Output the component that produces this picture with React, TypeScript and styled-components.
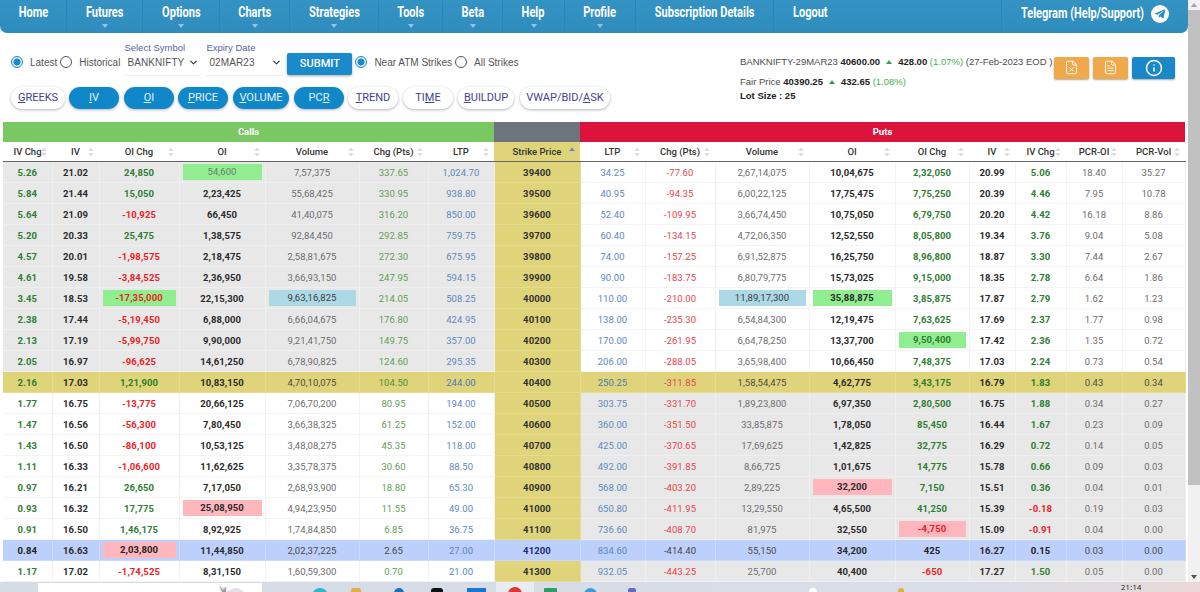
import React from "react";
import styled, { createGlobalStyle } from "styled-components";
import { ChevronDown, FileX, FileText, Info } from "lucide-react";
import { FaTelegramPlane } from "react-icons/fa";

const Global = createGlobalStyle`
  html, body { margin: 0; padding: 0; background: #fff; overflow: hidden; }
  * { box-sizing: border-box; }
`;

const Screen = styled.div`
  width: 1200px;
  height: 592px;
  display: flex;
  flex-direction: column;
  overflow: hidden;
`;
const Viewport = styled.div`
  height: 582px;
  display: flex;
`;
const Main = styled.main`
  width: 1188px;
  flex: none;
  display: flex;
  flex-direction: column;
`;

/* ---------- navigation ---------- */
const Nav = styled.nav`
  height: 33px;
  display: flex;
  background: linear-gradient(#3593c3, #2f8dbe);
  border-radius: 0 0 7px 7px;
  font-family: "Roboto", sans-serif;
  font-weight: 700;
  color: #fff;
`;
const NavItem = styled.div<{ $w: number; $start?: boolean }>`
  width: ${(p) => p.$w}px;
  flex: none;
  display: flex;
  flex-direction: column;
  align-items: ${(p) => (p.$start ? "flex-start" : "center")};
  padding: 5px 0 0 ${(p) => (p.$start ? 19 : 0)}px;
  border-right: 1px solid #2b86b5;
`;
const NavLabel = styled.span<{ $start?: boolean }>`
  display: block;
  font-size: 14.5px;
  line-height: 16px;
  white-space: nowrap;
  transform: scaleX(0.76);
  transform-origin: ${(p) => (p.$start ? "left center" : "center")};
`;
const Caret = styled.span`
  margin-top: 3px;
  width: 0;
  height: 0;
  border-left: 3.5px solid transparent;
  border-right: 3.5px solid transparent;
  border-top: 4px solid #8fc6e2;
`;
const NavRight = styled.div`
  flex: 1;
  display: flex;
  align-items: center;
  padding: 0 0 5px 19px;
`;
const TelegramLabel = styled.span`
  width: 130px;
  display: block;
  font-size: 15px;
  line-height: 17px;
  white-space: nowrap;
  transform: scaleX(0.73);
  transform-origin: left center;
`;
const PlaneDisc = styled.span`
  width: 18px;
  height: 18px;
  border-radius: 50%;
  background: #fff;
  color: #2f8dbe;
  display: flex;
  align-items: center;
  justify-content: center;
  flex: none;
`;

/* ---------- toolbar ---------- */
const Toolbar = styled.section`
  height: 89px;
  display: flex;
  justify-content: space-between;
  padding: 9px 13px 0 11px;
  font-family: "Liberation Sans", Arial, sans-serif;
`;
const LeftColumn = styled.div`
  display: flex;
  flex-direction: column;
  gap: 11px;
`;
const Controls = styled.div`
  height: 34px;
  display: flex;
  align-items: flex-end;
  font-size: 10px;
  color: #555;
`;
const RadioLabel = styled.label<{ $ml?: number }>`
  display: flex;
  align-items: center;
  height: 24px;
  margin-left: ${(p) => p.$ml ?? 0}px;
  padding-bottom: 3px;
`;
const RadioDot = styled.span<{ $on?: boolean }>`
  width: 12px;
  height: 12px;
  border-radius: 50%;
  border: 1px solid ${(p) => (p.$on ? "#1a8acb" : "#555")};
  background: ${(p) => (p.$on ? "radial-gradient(circle, #1a8acb 0 3.2px, #d5ecf8 3.8px)" : "#fff")};
  margin-right: 7px;
`;
const Field = styled.div<{ $w: number; $ml: number }>`
  width: ${(p) => p.$w}px;
  margin-left: ${(p) => p.$ml}px;
  display: flex;
  flex-direction: column;
`;
const FieldLabel = styled.span`
  color: #5b5fa8;
  font-size: 9.5px;
  line-height: 12px;
`;
const SelectBox = styled.div`
  height: 22px;
  display: flex;
  align-items: center;
  justify-content: space-between;
  padding: 0 1px 3px 3px;
  border-bottom: 1px solid #eee;
  color: #555;
  font-size: 10px;
  letter-spacing: 0.1px;
`;
const Submit = styled.button`
  width: 65px;
  height: 22px;
  margin: 0 3px 1px 4px;
  border: 0;
  border-radius: 2px;
  background: #1a8acb;
  color: #fff;
  font: 500 11px "Roboto", sans-serif;
  box-shadow: 0 1px 3px rgba(0, 0, 0, 0.35);
  align-self: flex-end;
`;
const Pills = styled.div`
  display: flex;
`;
const Pill = styled.button<{ $w: number; $ml: number; $on?: boolean }>`
  width: ${(p) => p.$w}px;
  margin-left: ${(p) => p.$ml}px;
  height: 22px;
  padding: 0;
  border: 0;
  border-radius: 11px;
  background: ${(p) => (p.$on ? "#0f87c9" : "#fff")};
  color: ${(p) => (p.$on ? "#e8f2fa" : "#3f4296")};
  font: 400 11px "Roboto", sans-serif;
  box-shadow: 0 1px 3px rgba(0, 0, 0, 0.3);
`;
const RightGroup = styled.div`
  display: flex;
  align-items: flex-start;
  gap: 4px;
`;
const InfoText = styled.div`
  width: 310px;
  padding-top: 13px;
  font-size: 9.5px;
  color: #4c4c4c;
  line-height: 14px;
  white-space: nowrap;
`;
const InfoLine = styled.div<{ $mb: number }>`
  margin-bottom: ${(p) => p.$mb}px;
  display: flex;
  align-items: center;
  white-space: pre;
`;
const Strong = styled.b`
  color: #222;
`;
const Up = styled.span`
  margin: 0 6px;
  width: 0;
  height: 0;
  border-left: 3.5px solid transparent;
  border-right: 3.5px solid transparent;
  border-bottom: 4px solid #3d9a5c;
`;
const Pct = styled.span`
  color: #4caf50;
`;
const Actions = styled.div`
  display: flex;
  gap: 4px;
  padding-top: 15px;
`;
const ActionBtn = styled.button<{ $w: number; $bg: string }>`
  width: ${(p) => p.$w}px;
  height: 22px;
  padding: 0;
  border: 0;
  border-radius: 2px;
  background: ${(p) => p.$bg};
  color: #fff;
  display: flex;
  align-items: center;
  justify-content: center;
  box-shadow: 0 1px 2px rgba(0, 0, 0, 0.35);
`;

/* ---------- table ---------- */
const TableWrap = styled.div`
  padding: 0 3px;
`;
const Table = styled.table`
  width: 1182px;
  table-layout: fixed;
  border-collapse: collapse;
  font-family: "Roboto", sans-serif;
  font-size: 9.5px;
`;
const BandCell = styled.th<{ $bg: string }>`
  height: 20px;
  padding: 0;
  background: ${(p) => p.$bg};
  color: #fff;
  font-size: 9.5px;
  font-weight: 700;
`;
const HeadCell = styled.th<{ $strike?: boolean }>`
  position: relative;
  height: 20px;
  padding: 0;
  font-weight: 500;
  font-size: 9.5px;
  color: #333;
  text-align: center;
  border-bottom: 1px solid #666;
  background: ${(p) => (p.$strike ? "#dfd479" : "#fff")};
`;
const SortMark = styled.svg`
  position: absolute;
  right: 5px;
  top: 5px;
`;
type Tone = "plain" | "itm" | "atm" | "low";
const toneBg: Record<Tone, string> = { plain: "#fff", itm: "#e8e8e8", atm: "#dfd479", low: "#bdcffb" };
const toneLine: Record<Tone, string> = { plain: "#f3f3f3", itm: "#efefef", atm: "#e6dc90", low: "#cddafc" };
const Cell = styled.td<{ $tone: Tone; $color: string; $bold?: boolean }>`
  height: 21px;
  padding: 0;
  text-align: center;
  background: ${(p) => toneBg[p.$tone]};
  color: ${(p) => p.$color};
  font-weight: ${(p) => (p.$bold ? 700 : 400)};
  letter-spacing: ${(p) => (p.$bold ? 0.1 : 0.05)}px;
  border-right: 1px solid ${(p) => toneLine[p.$tone]};
  border-bottom: 1px solid ${(p) => toneLine[p.$tone]};
`;
const Marked = styled.span<{ $bg: string }>`
  display: block;
  height: 16px;
  line-height: 16px;
  margin: 0 3px;
  background: ${(p) => p.$bg};
`;

/* ---------- scrollbar + taskbar ---------- */
const ScrollTrack = styled.div`
  width: 12px;
  flex: none;
  background: #f1f1f1;
  display: flex;
  flex-direction: column;
  align-items: center;
`;
const ArrowCell = styled.div`
  width: 12px;
  height: 10px;
  display: flex;
  align-items: center;
  justify-content: center;
`;
const Thumb = styled.div`
  width: 12px;
  height: 475px;
  background: #c1c1c1;
`;
const TrackGap = styled.div`
  flex: 1;
`;
const Arrow = styled.span<{ $up?: boolean; $c: string }>`
  width: 0;
  height: 0;
  border-left: 3px solid transparent;
  border-right: 3px solid transparent;
  ${(p) => (p.$up ? `border-bottom: 4px solid ${p.$c};` : `border-top: 4px solid ${p.$c};`)}
`;
const Taskbar = styled.footer`
  height: 10px;
  display: flex;
  overflow: hidden;
  background: linear-gradient(90deg, #d6dce6 0%, #d8dde8 80%, #e2dadd 94%, #ecd8d6 100%);
  font-family: "Noto Sans", sans-serif;
`;
const SearchBox = styled.div`
  width: 224px;
  margin: 1px 0 0 38px;
  background: #fff;
  display: flex;
  justify-content: flex-end;
  padding: 2px 17px 0 0;
`;
const Tile = styled.div<{ $active?: boolean; $ml: number; $w: number }>`
  width: ${(p) => p.$w}px;
  margin-left: ${(p) => p.$ml}px;
  flex: none;
  display: flex;
  justify-content: center;
  padding-top: ${(p) => (p.$active ? 5 : 6)}px;
  background: ${(p) => (p.$active ? "#e9ecf2" : "transparent")};
`;
const Blob = styled.span<{ $c: string; $r: number; $s: number }>`
  width: ${(p) => p.$s}px;
  height: ${(p) => p.$s}px;
  border-radius: ${(p) => p.$r}px;
  background: ${(p) => p.$c};
  flex: none;
`;
const Clock = styled.span<{ $ml: number }>`
  margin-left: ${(p) => p.$ml}px;
  padding-top: 1px;
  font-size: 7.5px;
  line-height: 9px;
  letter-spacing: 0.3px;
  color: #222;
`;

/* ---------- data ---------- */
const widths = [49, 47, 80, 86, 94, 69, 66, 86, 65, 70, 94, 86, 74, 46, 51, 56, 63];
const navItems: [string, number, boolean][] = [
  ["Home", 67, false], ["Futures", 76, true], ["Options", 77, true], ["Charts", 70, true],
  ["Strategies", 89, true], ["Tools", 64, true], ["Beta", 60, true], ["Help", 62, true],
  ["Profile", 71, true], ["Subscription Details", 138, false],
];
const pills: [string, string, string, number, number, boolean][] = [
  ["", "G", "REEKS", 54, 0, false], ["", "I", "V", 50, 4, true], ["", "O", "I", 50, 5, true],
  ["", "P", "RICE", 50, 4, true], ["", "V", "OLUME", 56, 5, true], ["PC", "R", "", 50, 5, true],
  ["", "T", "REND", 50, 4, false], ["TI", "M", "E", 50, 5, false], ["", "B", "UILDUP", 56, 5, false],
  ["VWAP/BID/", "A", "SK", 90, 6, false],
];
const heads = ["IV Chg", "IV", "OI Chg", "OI", "Volume", "Chg (Pts)", "LTP", "Strike Price", "LTP", "Chg (Pts)", "Volume", "OI", "OI Chg", "IV", "IV Chg", "PCR-OI", "PCR-Vol"];
const raw = `5.26 21.02 24,850 54,600 7,57,375 337.65 1,024.70 39400 34.25 -77.60 2,67,14,075 10,04,675 2,32,050 20.99 5.06 18.40 35.27
5.84 21.44 15,050 2,23,425 55,68,425 330.95 938.80 39500 40.95 -94.35 6,00,22,125 17,75,475 7,75,250 20.39 4.46 7.95 10.78
5.64 21.09 -10,925 66,450 41,40,075 316.20 850.00 39600 52.40 -109.95 3,66,74,450 10,75,050 6,79,750 20.20 4.42 16.18 8.86
5.20 20.33 25,475 1,38,575 92,84,450 292.85 759.75 39700 60.40 -134.15 4,72,06,350 12,52,550 8,05,800 19.34 3.76 9.04 5.08
4.57 20.01 -1,98,575 2,18,475 2,58,81,675 272.30 675.95 39800 74.00 -157.25 6,91,52,875 16,25,750 8,96,800 18.87 3.30 7.44 2.67
4.61 19.58 -3,84,525 2,36,950 3,66,93,150 247.95 594.15 39900 90.00 -183.75 6,80,79,775 15,73,025 9,15,000 18.35 2.78 6.64 1.86
3.45 18.53 -17,35,000 22,15,300 9,63,16,825 214.05 508.25 40000 110.00 -210.00 11,89,17,300 35,88,875 3,85,875 17.87 2.79 1.62 1.23
2.38 17.44 -5,19,450 6,88,000 6,66,04,675 176.80 424.95 40100 138.00 -235.30 6,54,84,300 12,19,475 7,63,625 17.69 2.37 1.77 0.98
2.13 17.19 -5,99,750 9,90,000 9,21,41,750 149.75 357.00 40200 170.00 -261.95 6,64,78,250 13,37,700 9,50,400 17.42 2.36 1.35 0.72
2.05 16.97 -96,625 14,61,250 6,78,90,825 124.60 295.35 40300 206.00 -288.05 3,65,98,400 10,66,450 7,48,375 17.03 2.24 0.73 0.54
2.16 17.03 1,21,900 10,83,150 4,70,10,075 104.50 244.00 40400 250.25 -311.85 1,58,54,475 4,62,775 3,43,175 16.79 1.83 0.43 0.34
1.77 16.75 -13,775 20,66,125 7,06,70,200 80.95 194.00 40500 303.75 -331.70 1,89,23,800 6,97,350 2,80,500 16.75 1.88 0.34 0.27
1.47 16.56 -56,300 7,80,450 3,66,38,325 61.25 152.00 40600 360.00 -351.50 33,85,875 1,78,050 85,450 16.44 1.67 0.23 0.09
1.43 16.50 -86,100 10,53,125 3,48,08,275 45.35 118.00 40700 425.00 -370.65 17,69,625 1,42,825 32,775 16.29 0.72 0.14 0.05
1.11 16.33 -1,06,600 11,62,625 3,35,78,375 30.60 88.50 40800 492.00 -391.85 8,66,725 1,01,675 14,775 15.78 0.66 0.09 0.03
0.97 16.21 26,650 7,17,050 2,68,93,900 18.80 65.30 40900 568.00 -403.20 2,89,225 32,200 7,150 15.51 0.36 0.04 0.01
0.93 16.32 17,775 25,08,950 4,94,23,950 11.55 49.00 41000 650.80 -411.95 13,29,550 4,65,500 41,250 15.39 -0.18 0.19 0.03
0.91 16.50 1,46,175 8,92,925 1,74,84,850 6.85 36.75 41100 736.60 -408.70 81,975 32,550 -4,750 15.09 -0.91 0.04 0.00
0.84 16.63 2,03,800 11,44,850 2,02,37,225 2.65 27.00 41200 834.60 -414.40 55,150 34,200 425 16.27 0.15 0.03 0.00
1.17 17.02 -1,74,525 8,31,150 1,60,59,300 0.70 21.00 41300 932.05 -443.25 25,700 40,400 -650 17.27 1.50 0.05 0.00`;
const rows = raw.split("\n").map((l) => l.split(" "));

const GREEN = "#90ee90", BLUE = "#add8e6", PINK = "#ffb6bd";
const marks: Record<string, string> = {
  "39400-3": GREEN, "40000-2": GREEN, "40000-4": BLUE, "40000-10": BLUE, "40000-11": GREEN,
  "40200-12": GREEN, "41000-3": PINK, "40900-11": PINK, "41200-2": PINK, "41100-12": PINK,
};

const boldCols = new Set([0, 1, 2, 3, 7, 11, 12, 13, 14]);
const signedBold = new Set([0, 2, 12, 14]);
const signedThin = new Set([5, 9]);

function colorOf(col: number, v: string, strike: number, marked: boolean) {
  const low = strike === 41200;
  const atm = strike === 40400;
  if (col === 7) return low ? "#1d2a7a" : "#333";
  if (col === 6 || col === 8) return atm ? "#4a78b8" : "#5c88c0";
  if (signedBold.has(col)) {
    if (low) return "#222";
    return v.startsWith("-") ? "#ee1c25" : "#2e7d32";
  }
  if (signedThin.has(col)) {
    if (low) return "#444";
    if (v.startsWith("-")) return "#e8434f";
    return atm ? "#4f8f45" : "#5f9e55";
  }
  if (col === 1 || col === 3 || col === 11 || col === 13) return "#2b2b2b";
  if (marked) return "#3c3c3c";
  return low || atm ? "#4c4c4c" : "#6d6d6d";
}

function toneOf(col: number, strike: number): Tone {
  if (strike === 40400) return "atm";
  if (strike === 41200) return "low";
  if (col === 7) return "atm";
  const isCall = col < 7;
  if (strike < 40400) return isCall ? "itm" : "plain";
  return isCall ? "plain" : "itm";
}

const Sort = ({ active }: { active?: boolean }) => (
  <SortMark width="6" height="10" viewBox="0 0 6 10">
    <path d="M3 0.5 L5.8 4 H0.2 Z" fill={active ? "#6f7fc0" : "#dcdcdc"} />
    {!active && <path d="M3 9.5 L5.8 6 H0.2 Z" fill="#dcdcdc" />}
  </SortMark>
);

const Cat = () => (
  <svg width="28" height="10" viewBox="0 0 28 10">
    <path d="M2 0 L5 3 L9 1 L10 6 L18 3 C24 3 27 6 27 10 H7 C4 8 2 5 2 0Z" fill="#e6dfe8" />
    <path d="M3 1 L6 5 L9 2 L9 7 L5 7Z" fill="#a49aa8" />
  </svg>
);

export default function App() {
  return (
    <Screen>
      <Global />
      <Viewport>
        <Main>
          <Nav>
            {navItems.map(([label, w, caret]) => (
              <NavItem key={label} $w={w}>
                <NavLabel>{label}</NavLabel>
                {caret && <Caret />}
              </NavItem>
            ))}
            <NavItem $w={228} $start>
              <NavLabel $start>Logout</NavLabel>
            </NavItem>
            <NavRight>
              <TelegramLabel>Telegram (Help/Support)</TelegramLabel>
              <PlaneDisc>
                <FaTelegramPlane size={12} />
              </PlaneDisc>
            </NavRight>
          </Nav>

          <Toolbar>
            <LeftColumn>
              <Controls>
                <RadioLabel>
                  <RadioDot $on />
                  Latest
                </RadioLabel>
                <RadioLabel $ml={3}>
                  <RadioDot />
                  Historical
                </RadioLabel>
                <Field $w={76} $ml={4}>
                  <FieldLabel>Select Symbol</FieldLabel>
                  <SelectBox>
                    BANKNIFTY
                    <ChevronDown size={11} color="#333" strokeWidth={2.5} />
                  </SelectBox>
                </Field>
                <Field $w={77} $ml={6}>
                  <FieldLabel>Expiry Date</FieldLabel>
                  <SelectBox>
                    02MAR23
                    <ChevronDown size={11} color="#333" strokeWidth={2.5} />
                  </SelectBox>
                </Field>
                <Submit>SUBMIT</Submit>
                <RadioLabel>
                  <RadioDot $on />
                  Near ATM Strikes
                </RadioLabel>
                <RadioLabel $ml={3}>
                  <RadioDot />
                  All Strikes
                </RadioLabel>
              </Controls>
              <Pills>
                {pills.map(([a, u, b, w, ml, on]) => (
                  <Pill key={a + u + b} $w={w} $ml={ml} $on={on}>
                    {a}
                    <u>{u}</u>
                    {b}
                  </Pill>
                ))}
              </Pills>
            </LeftColumn>

            <RightGroup>
              <InfoText>
                <InfoLine $mb={6}>
                  BANKNIFTY-29MAR23 <Strong>40600.00</Strong>
                  <Up />
                  <Strong>428.00 </Strong>
                  <Pct>(1.07%) </Pct>(27-Feb-2023 EOD )
                </InfoLine>
                <InfoLine $mb={0}>
                  Fair Price <Strong>40390.25</Strong>
                  <Up />
                  <Strong>432.65 </Strong>
                  <Pct>(1.08%)</Pct>
                </InfoLine>
                <InfoLine $mb={0}>
                  <Strong>Lot Size : 25</Strong>
                </InfoLine>
              </InfoText>
              <Actions>
                <ActionBtn $w={35} $bg="#efa94a">
                  <FileX size={15} strokeWidth={1.5} />
                </ActionBtn>
                <ActionBtn $w={35} $bg="#efa94a">
                  <FileText size={15} strokeWidth={1.5} />
                </ActionBtn>
                <ActionBtn $w={43} $bg="#1a87c9">
                  <Info size={18} strokeWidth={2} />
                </ActionBtn>
              </Actions>
            </RightGroup>
          </Toolbar>

          <TableWrap>
            <Table>
              <colgroup>
                {widths.map((w, i) => (
                  <col key={i} width={w} />
                ))}
              </colgroup>
              <thead>
                <tr>
                  <BandCell colSpan={7} $bg="#7ac862">Calls</BandCell>
                  <BandCell $bg="#6c757d" />
                  <BandCell colSpan={9} $bg="#dc143c">Puts</BandCell>
                </tr>
                <tr>
                  {heads.map((h, i) => (
                    <HeadCell key={i} $strike={i === 7}>
                      {h}
                      <Sort active={i === 7} />
                    </HeadCell>
                  ))}
                </tr>
              </thead>
              <tbody>
                {rows.map((r) => {
                  const strike = Number(r[7]);
                  return (
                    <tr key={strike}>
                      {r.map((v, col) => {
                        const mark = marks[`${strike}-${col}`];
                        const soft = v === "54,600";
                        return (
                          <Cell
                            key={col}
                            $tone={toneOf(col, strike)}
                            $bold={boldCols.has(col) && !soft}
                            $color={soft ? "#6b7f6b" : v === "2,03,800" ? "#222" : colorOf(col, v, strike, !!mark)}
                          >
                            {mark ? <Marked $bg={mark}>{v}</Marked> : v}
                          </Cell>
                        );
                      })}
                    </tr>
                  );
                })}
              </tbody>
            </Table>
          </TableWrap>
        </Main>
        <ScrollTrack>
          <ArrowCell>
            <Arrow $up $c="#a0a0a0" />
          </ArrowCell>
          <Thumb />
          <TrackGap />
          <ArrowCell>
            <Arrow $c="#505050" />
          </ArrowCell>
        </ScrollTrack>
      </Viewport>
      <Taskbar>
        <SearchBox>
          <Cat />
        </SearchBox>
        <Tile $ml={50} $w={16}><Blob $c="#2fb8c6" $r={8} $s={16} /></Tile>
        <Tile $ml={23} $w={10}><Blob $c="#e2b04a" $r={2} $s={10} /></Tile>
        <Tile $ml={33} $w={10}><Blob $c="#1f6fb5" $r={5} $s={10} /></Tile>
        <Tile $ml={26} $w={14}><Blob $c="#111" $r={3} $s={12} /></Tile>
        <Tile $ml={23} $w={19}><Blob $c="#1976d2" $r={0} $s={19} /></Tile>
        <Tile $active $ml={10} $w={38}><Blob $c="#d93a30" $r={8} $s={14} /></Tile>
        <Tile $ml={10} $w={13}><Blob $c="#2f9e63" $r={1} $s={13} /></Tile>
        <Tile $ml={27} $w={13}><Blob $c="#3f9bd8" $r={7} $s={13} /></Tile>
        <Tile $ml={31} $w={8}><Blob $c="#6a6ab8" $r={2} $s={8} /></Tile>
        <Tile $ml={173} $w={8}><Blob $c="#fff" $r={4} $s={8} /></Tile>
        <Tile $ml={81} $w={6}><Blob $c="#e2b04a" $r={3} $s={6} /></Tile>
        <Clock $ml={217}>21:14</Clock>
      </Taskbar>
    </Screen>
  );
}
